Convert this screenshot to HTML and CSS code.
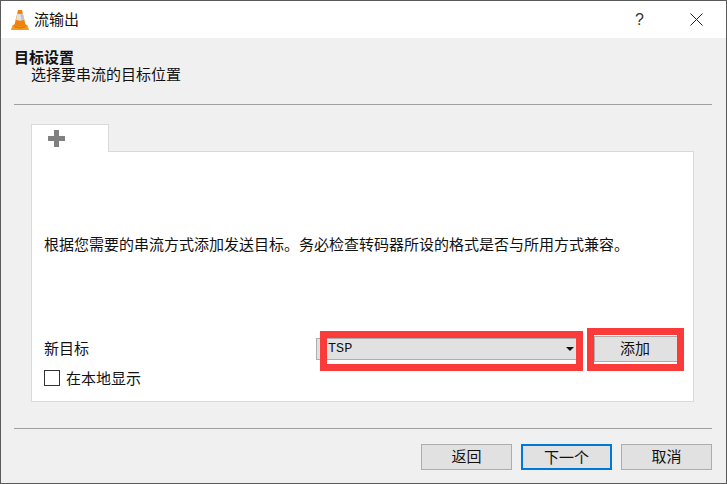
FILE: index.html
```html
<!DOCTYPE html>
<html lang="zh-CN">
<head>
    <meta charset="UTF-8">
    <title>流输出</title>
    <link rel="stylesheet" href="styles.css">
</head>
<body>
    <div class="window">
        <div class="titlebar">
            <svg class="cone" width="18" height="20" viewBox="0 0 18 20">
                <path d="M0 20 L1.5 15.5 L4 14 L14 14 L16.5 15.5 L18 20 Z" fill="#f59a1e"/>
                <path d="M3 14.5 C6 17.5 12 17.5 15 14.5 L15.5 16.5 C12 19 6 19 2.5 16.5 Z" fill="#e87a08"/>
                <path d="M7 0 L11 0 L14.5 14.5 C11.5 16.5 6.5 16.5 3.5 14.5 Z" fill="#f0820e"/>
                <path d="M6.3 3.5 C7.5 4.2 10.5 4.2 11.7 3.5 L13 9.5 C11 11 7 11 5 9.5 Z" fill="#e2e2e2"/>
                <path d="M9 3.8 L11.7 3.5 L13 9.5 L10.5 10.4 Z" fill="#c4c4c4"/>
            </svg>
            <span class="title">流输出</span>
            <span class="help">?</span>
            <svg class="close" width="13" height="13" viewBox="0 0 13 13">
                <path d="M0.5 0.5 L12.5 12.5 M12.5 0.5 L0.5 12.5" stroke="#222" stroke-width="1" fill="none"/>
            </svg>
        </div>
        <div class="content">
            <div class="heading">目标设置</div>
            <div class="subheading">选择要串流的目标位置</div>
            <div class="rule rule-top"></div>
            <div class="tab"><span class="plus"></span></div>
            <div class="pane">
                <p class="hint">根据您需要的串流方式添加发送目标。务必检查转码器所设的格式是否与所用方式兼容。</p>
                <div class="target-row">
                    <span class="target-label">新目标</span>
                    <div class="combo">
                        <span class="combo-value">TSP</span>
                        <span class="combo-arrow"></span>
                        <span class="mark mark-combo"></span>
                    </div>
                    <div class="add-wrap">
                        <button class="btn add">添加</button>
                        <span class="mark mark-add"></span>
                    </div>
                </div>
                <label class="local"><span class="check"></span>在本地显示</label>
            </div>
            <div class="rule rule-bottom"></div>
            <div class="actions">
                <button class="btn">返回</button>
                <button class="btn primary">下一个</button>
                <button class="btn">取消</button>
            </div>
        </div>
    </div>
</body>
</html>
```

FILE: styles.css
```css
* {
    box-sizing: border-box;
}
html, body {
    margin: 0;
    height: 100%;
    overflow: hidden;
}
body {
    font-family: "Noto Sans CJK SC", sans-serif;
    font-size: 15px;
    color: #111;
    background-color: #f0f0f0;
}
.window {
    height: 484px;
    border: 1px solid #5a5a5a;
    display: flex;
    flex-direction: column;
}
.titlebar {
    height: 37px;
    background-color: #fff;
    display: flex;
    align-items: center;
    padding-left: 10px;
    flex-shrink: 0;
}
.cone {
    margin-right: 5px;
}
.title {
    line-height: 20px;
    padding-bottom: 1px;
    flex-grow: 1;
}
.help {
    font-family: "Liberation Sans", sans-serif;
    font-size: 16px;
    color: #333;
    width: 20px;
    margin-right: 35px;
}
.close {
    margin-right: 23px;
}
.content {
    flex-grow: 1;
    padding: 10px 14px 0 13px;
}
.heading {
    font-weight: bold;
    line-height: 17px;
}
.subheading {
    line-height: 17px;
    margin-left: 17px;
}
.rule {
    height: 1px;
    background-color: #a0a0a0;
}
.rule-top {
    margin-top: 22px;
}
.tab {
    width: 78px;
    height: 28px;
    margin: 19px 0 -1px 17px;
    background-color: #fff;
    border: 1px solid #d9d9d9;
    border-bottom: none;
    position: relative;
    z-index: 1;
    padding: 5px 0 0 16px;
}
.plus {
    display: block;
    width: 17px;
    height: 17px;
    background:
        linear-gradient(#808080, #808080) center / 17px 5px no-repeat,
        linear-gradient(#808080, #808080) center / 5px 17px no-repeat;
}
.pane {
    height: 251px;
    margin: 0 18px 0 17px;
    background-color: #fff;
    border: 1px solid #d9d9d9;
    padding: 0 12px;
}
.hint {
    margin: 82px 0 0;
    line-height: 20px;
    white-space: nowrap;
}
.target-row {
    display: flex;
    align-items: center;
    margin-top: 82px;
    height: 26px;
}
.target-label {
    width: 272px;
    line-height: 20px;
    padding-bottom: 3px;
}
.combo {
    width: 264px;
    height: 22px;
    background-color: #e1e1e1;
    border: 1px solid #adadad;
    position: relative;
    display: flex;
    align-items: center;
    padding: 0 5px 1px 11px;
}
.combo-value {
    font-family: "Liberation Mono", monospace;
    font-size: 13.5px;
    flex-grow: 1;
}
.combo-arrow {
    border-left: 4px solid transparent;
    border-right: 4px solid transparent;
    border-top: 4px solid #111;
}
.add-wrap {
    position: relative;
    margin-left: 14px;
}
.btn {
    width: 91px;
    height: 26px;
    padding: 0 0 3px;
    font-family: inherit;
    font-size: 15px;
    color: #111;
    background-color: #e1e1e1;
    border: 1px solid #adadad;
    border-radius: 0;
}
.add {
    display: block;
    width: 84px;
    padding-right: 2px;
}
.mark {
    position: absolute;
    border: 7px solid #fb3a3a;
    pointer-events: none;
}
.mark-combo {
    left: 3px;
    top: -8px;
    width: 263px;
    height: 40px;
}
.mark-add {
    left: -7px;
    top: -8px;
    width: 97px;
    height: 43px;
}
.local {
    display: flex;
    align-items: center;
    margin-top: 6px;
    line-height: 20px;
}
.check {
    width: 16px;
    height: 16px;
    border: 1px solid #333;
    background-color: #fff;
    margin-right: 6px;
}
.rule-bottom {
    margin-top: 26px;
}
.actions {
    display: flex;
    justify-content: flex-end;
    gap: 9px;
    margin-top: 15px;
}
.primary {
    border: 2px solid #0078d7;
}
```
